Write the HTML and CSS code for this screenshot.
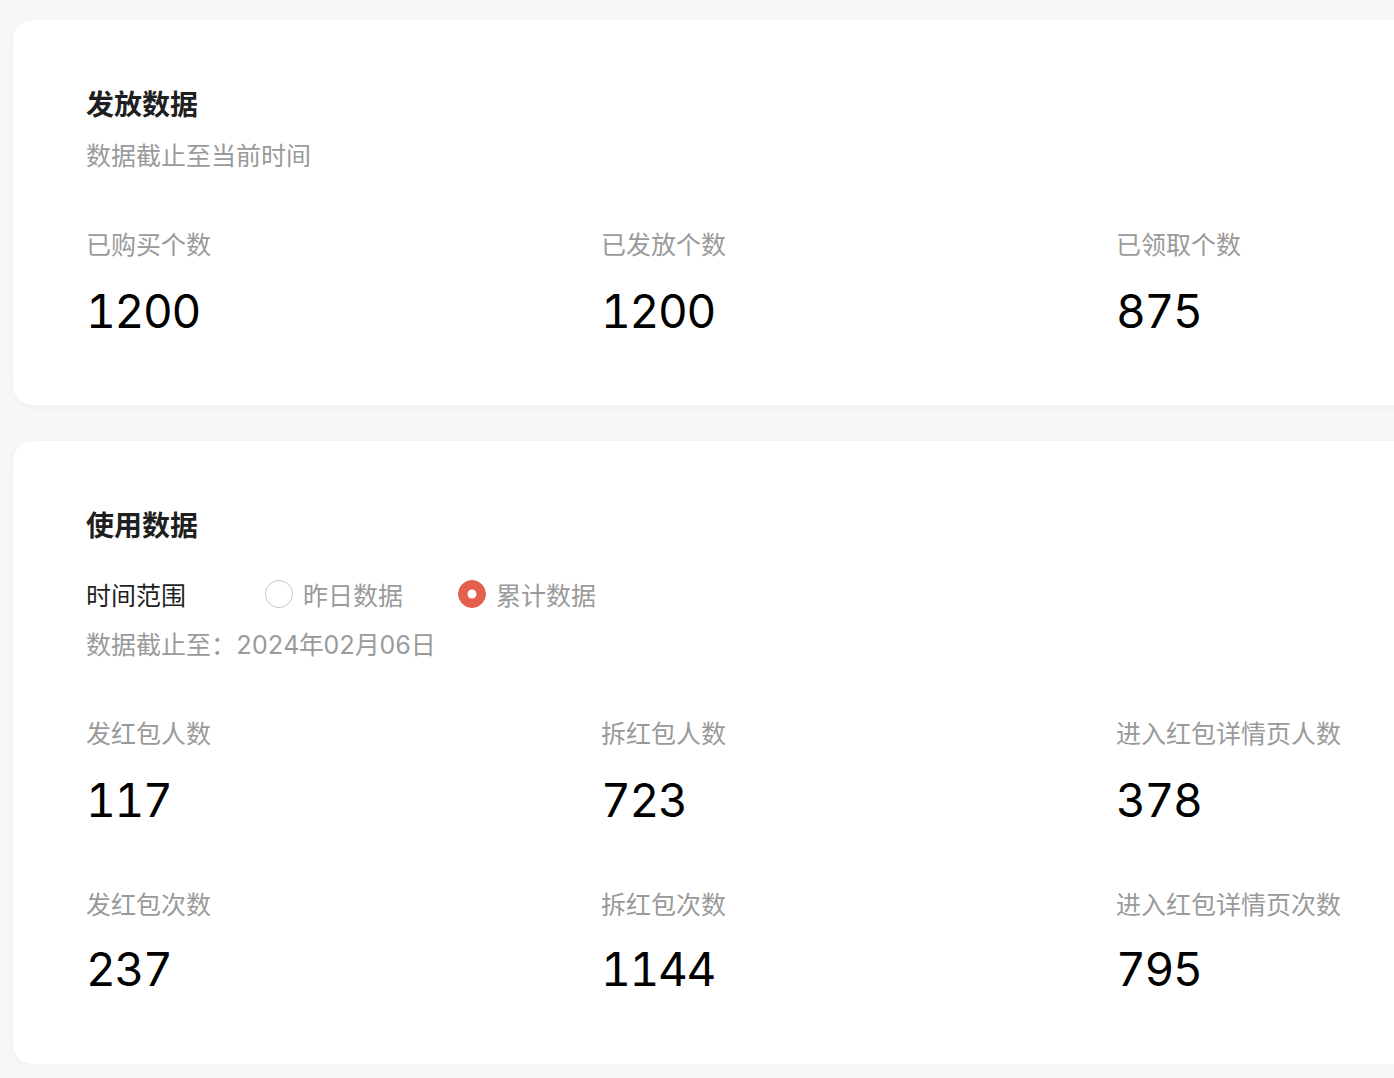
FILE: index.html
```html
<!DOCTYPE html>
<html lang="zh-CN">
<head>
<meta charset="utf-8">
<title>数据</title>
<link rel="stylesheet" href="styles.css">
</head>
<body>
<div class="page">
  <section class="card card-issue">
    <h2 class="card-title">发放数据</h2>
    <p class="subtitle">数据截止至当前时间</p>
    <div class="stats">
      <div class="stat"><div class="stat-label">已购买个数</div><div class="stat-value">1200</div></div>
      <div class="stat"><div class="stat-label">已发放个数</div><div class="stat-value">1200</div></div>
      <div class="stat"><div class="stat-label">已领取个数</div><div class="stat-value">875</div></div>
    </div>
  </section>

  <section class="card card-usage">
    <h2 class="card-title">使用数据</h2>
    <div class="range-row">
      <span class="range-label">时间范围</span>
      <label class="radio"><span class="radio-dot"></span><span class="radio-text">昨日数据</span></label>
      <label class="radio checked"><span class="radio-dot"></span><span class="radio-text">累计数据</span></label>
    </div>
    <p class="date-line">数据截止至：<span class="date-value">2024年02月06日</span></p>
    <div class="stats stats-first">
      <div class="stat"><div class="stat-label">发红包人数</div><div class="stat-value">117</div></div>
      <div class="stat"><div class="stat-label">拆红包人数</div><div class="stat-value">723</div></div>
      <div class="stat"><div class="stat-label">进入红包详情页人数</div><div class="stat-value">378</div></div>
    </div>
    <div class="stats stats-second">
      <div class="stat"><div class="stat-label">发红包次数</div><div class="stat-value">237</div></div>
      <div class="stat"><div class="stat-label">拆红包次数</div><div class="stat-value">1144</div></div>
      <div class="stat"><div class="stat-label">进入红包详情页次数</div><div class="stat-value">795</div></div>
    </div>
  </section>
</div>
</body>
</html>
```

FILE: styles.css
```css
* { box-sizing: border-box; }
html, body {
  margin: 0;
  padding: 0;
  background: #f6f7f9;
  overflow: hidden;
}
body {
  font-family: "Noto Sans CJK SC", "Noto Sans", sans-serif;
  color: #1f1f1f;
}
.page {
  padding: 20px 0 0 13px;
  width: 1800px;
  display: flex;
  flex-direction: column;
  gap: 36px;
}
.card {
  width: 1700px;
  background: #ffffff;
  border-radius: 20px;
  box-shadow: 0 2px 10px rgba(30, 40, 60, 0.04);
  padding: 63px 0 66px 73px;
}
.card-usage { padding-bottom: 67px; }
.card-title {
  margin: 0;
  font-size: 28px;
  line-height: 40px;
  font-weight: 700;
  color: #1f1f1f;
}
.subtitle {
  margin: 13px 0 0;
  font-size: 25px;
  line-height: 36px;
  color: #9a9a9a;
}
.stats {
  margin-top: 53px;
  display: grid;
  grid-template-columns: repeat(3, 515px);
}
.stats-first { margin-top: 51px; }
.stats-second { margin-top: 57px; }
.stat-label {
  font-size: 25px;
  line-height: 36px;
  color: #9a9a9a;
}
.stat-value {
  margin-top: 22px;
  font-family: "Inter", "Roboto", sans-serif;
  font-feature-settings: "tnum" 1;
  font-variant-numeric: tabular-nums;
  font-size: 46px;
  letter-spacing: -1.3px;
  line-height: 56px;
  color: #000000;
}
.stats-second .stat-value { margin-top: 20px; }
.range-row {
  margin-top: 32px;
  display: flex;
  align-items: center;
  height: 36px;
}
.range-label {
  font-size: 25px;
  line-height: 36px;
  color: #1f1f1f;
  width: 179px;
}
.radio {
  display: flex;
  align-items: center;
  gap: 10px;
  margin-right: 55px;
}
.radio-dot {
  width: 28px;
  height: 28px;
  border-radius: 50%;
  border: 1.5px solid #c6c6c6;
  position: relative;
}
.radio.checked .radio-dot {
  background: #e4604e;
  border-color: #e4604e;
}
.radio.checked .radio-dot::after {
  content: "";
  position: absolute;
  width: 9px;
  height: 9px;
  border-radius: 50%;
  background: #ffffff;
  left: 50%;
  top: 50%;
  transform: translate(-50%, -50%);
}
.radio-text {
  font-size: 25px;
  line-height: 36px;
  color: #9a9a9a;
}
.date-line {
  margin: 15px 0 0;
  font-family: "Inter", "Noto Sans CJK SC", sans-serif;
  font-feature-settings: "tnum" 1;
  font-size: 25px;
  line-height: 36px;
  color: #9a9a9a;
}
.date-value { letter-spacing: -0.5px; }
```
